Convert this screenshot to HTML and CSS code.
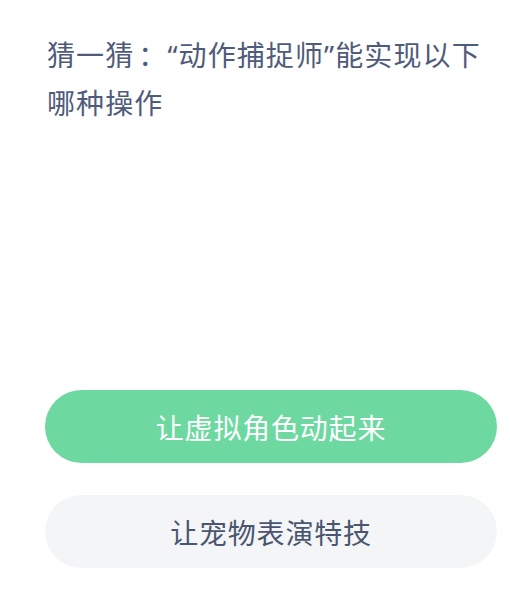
FILE: index.html
```html
<!DOCTYPE html>
<html lang="zh-CN">
<head>
    <meta charset="UTF-8">
    <meta name="viewport" content="width=device-width, initial-scale=1.0">
    <title>猜一猜</title>
    <link rel="stylesheet" href="styles.css">
</head>
<body>
    <div class="quiz">
        <h1 class="question">猜一猜<span class="colon">：</span>“动作捕捉师”能实现以下<br>哪种操作</h1>
        <div class="blank"></div>
        <div class="options">
            <div class="option correct">让虚拟角色动起来</div>
            <div class="option">让宠物表演特技</div>
        </div>
    </div>
</body>
</html>
```

FILE: styles.css
```css
body {
    margin: 0;
    background: #ffffff;
    font-family: "Noto Sans CJK SC", "Noto Sans", sans-serif;
}

.quiz {
    padding: 30px 13px 0 45px;
}

.question {
    margin: 0;
    height: 96px;
    font-family: "Noto Sans", "Noto Sans CJK SC", sans-serif;
    font-size: 28px;
    font-weight: normal;
    line-height: 48px;
    letter-spacing: 1.1px;
    color: #4f5b7b;
    padding-left: 2px;
    text-spacing-trim: space-all;
    white-space: nowrap;
}

.colon {
    font-family: "Noto Sans CJK TC", sans-serif;
    padding-left: 4px;
}

.blank {
    height: 264px;
}

.options {
    display: flex;
    flex-direction: column;
    gap: 32px;
}

.option {
    height: 73px;
    border-radius: 37px;
    background: #f4f5f7;
    color: #4a5570;
    font-size: 28px;
    letter-spacing: 0.8px;
    display: flex;
    align-items: center;
    justify-content: center;
}

.option.correct {
    background: #6dd9a1;
    color: #ffffff;
}
```
